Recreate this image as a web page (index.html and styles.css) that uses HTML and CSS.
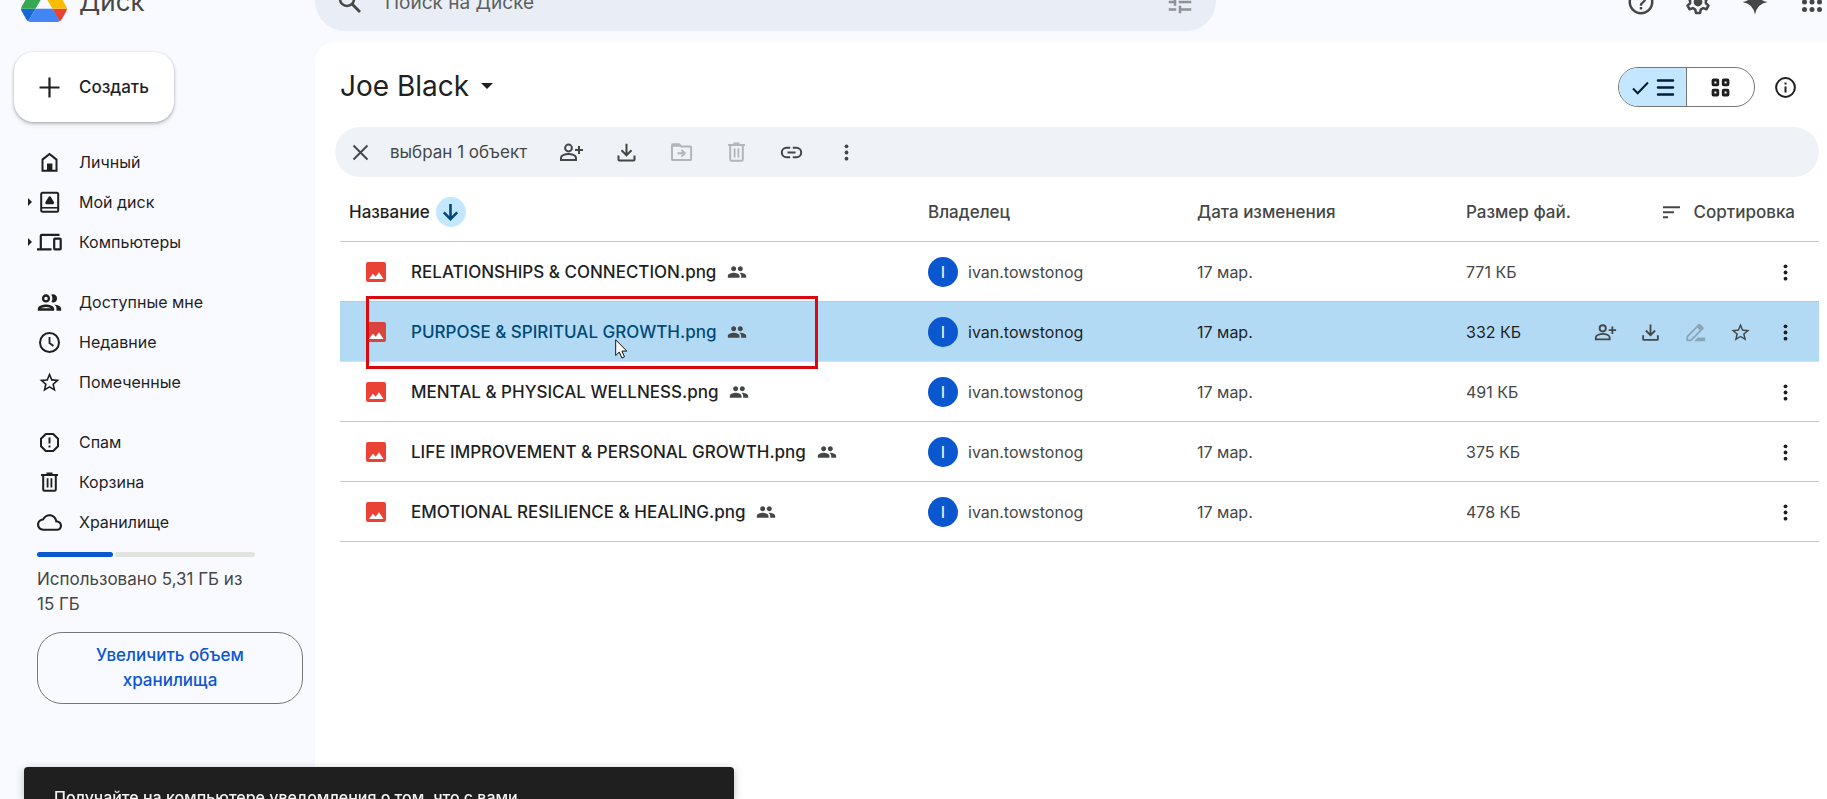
FILE: index.html
```html
<!DOCTYPE html>
<html lang="ru">
<head>
<meta charset="utf-8">
<meta name="viewport" content="width=device-width, initial-scale=1">
<title>Joe Black – Диск</title>
<link rel="stylesheet" href="styles.css">
</head>
<body>
<svg class="sprite" aria-hidden="true">
  <symbol id="i-home" viewBox="0 0 25 25"><path d="M5.5 20.7V9.6L12.5 4l7 5.6v11.1Z" fill="none" stroke="currentColor" stroke-width="2"/><path d="M10 13.5h5.4V21H10Z"/></symbol>
  <symbol id="i-drive" viewBox="0 0 25 25"><rect x="4.2" y="2.7" width="17" height="19" rx="1.5" fill="none" stroke="currentColor" stroke-width="2"/><path d="M4 17.8h17" stroke="currentColor" stroke-width="1.6"/><path d="m12.7 7.9 2.9 4.900H9.800Z" fill="none" stroke="currentColor" stroke-width="3" stroke-linejoin="round"/></symbol>
  <symbol id="i-devices" viewBox="0 0 25 25"><path d="M22.5 4.8H4.8q-1 0-1 1V19M0 19.3h14.5" fill="none" stroke="currentColor" stroke-width="2.2"/><rect x="17.2" y="8.6" width="6.5" height="10.8" rx=".8" fill="none" stroke="currentColor" stroke-width="2.2"/></symbol>
  <symbol id="i-people" viewBox="1.3 1.3 21.4 21.4"><path d="M9 13.75c-2.34 0-7 1.17-7 3.5V19h14v-1.75c0-2.33-4.66-3.5-7-3.5zM4.34 17c.84-.58 2.87-1.25 4.66-1.25s3.82.67 4.66 1.25H4.34zM9 12c1.93 0 3.5-1.57 3.5-3.5S10.930 5 9 5 5.500 6.570 5.500 8.500 7.070 12 9 12zm0-5c.83 0 1.500.67 1.500 1.500S9.830 10 9 10s-1.500-.67-1.500-1.500S8.170 7 9 7zm7.040 6.810c1.160.84 1.960 1.960 1.960 3.440V19h4v-1.750c0-2.020-3.500-3.170-5.960-3.440zM15 12c1.930 0 3.500-1.570 3.500-3.500S16.930 5 15 5c-.54 0-1.040.13-1.500.35.63.89 1 1.980 1 3.150s-.37 2.260-1 3.150c.46.22.96.35 1.500.35z"/></symbol>
  <symbol id="i-clock" viewBox="0 0 25 25"><circle cx="12.500" cy="12.500" r="9.500" fill="none" stroke="currentColor" stroke-width="2"/><path d="M12.500 7v6l4 3" fill="none" stroke="currentColor" stroke-width="1.800"/></symbol>
  <symbol id="i-star" viewBox="-.5 -.5 25 25"><path d="M22 9.240l-7.190-.62L12 2 9.190 8.630 2 9.240l5.460 4.730L5.820 21 12 17.270 18.180 21l-1.630-7.030L22 9.240zM12 15.400l-3.760 2.270 1-4.280-3.320-2.880 4.380-.38L12 6.100l1.710 4.040 4.380.38-3.320 2.880 1 4.280L12 15.400z"/></symbol>
  <symbol id="i-spam" viewBox="0 0 25 25"><path d="M8.800 4h7.400l4.800 4.800v7.400L16.200 21H8.800L4 16.200V8.800Z" fill="none" stroke="currentColor" stroke-width="2" stroke-linejoin="round"/><path d="M11.500 7.500h2v6h-2zM11.500 15.500h2v2h-2z"/></symbol>
  <symbol id="i-trash" viewBox="0 0 25 25"><path d="M4 4.900h17M9.500 3.600h6" fill="none" stroke="currentColor" stroke-width="2"/><path d="M6.200 5v14.500q0 1.300 1.300 1.300h10q1.300 0 1.300-1.300V5" fill="none" stroke="currentColor" stroke-width="2"/><path d="M10.600 8.200v9.200M14.400 8.200v9.200" stroke="currentColor" stroke-width="1.800"/></symbol>
  <symbol id="i-cloud" viewBox="0 0 24 24"><path d="M19.350 10.040C18.670 6.590 15.640 4 12 4 9.110 4 6.600 5.640 5.350 8.040 2.340 8.360 0 10.910 0 14c0 3.310 2.690 6 6 6h13c2.760 0 5-2.240 5-5 0-2.640-2.050-4.780-4.650-4.960zM19 18H6c-2.210 0-4-1.790-4-4 0-2.050 1.530-3.760 3.560-3.970l1.070-.11.5-.95C8.080 7.140 9.940 6 12 6c2.620 0 4.880 1.860 5.390 4.430l.3 1.500 1.530.11c1.560.1 2.780 1.410 2.780 2.960 0 1.650-1.350 3-3 3z"/></symbol>
  <symbol id="i-plus" viewBox="0 0 25 25"><path d="M12.500 2.500v20M2.500 12.500h20" stroke="currentColor" stroke-width="2.200"/></symbol>
  <symbol id="i-close" viewBox="0 0 25 25"><path d="m5.500 5.500 14 14M19.500 5.500l-14 14" stroke="currentColor" stroke-width="1.900"/></symbol>
  <symbol id="i-adduser" viewBox="0 0 25 25"><circle cx="9.500" cy="8" r="3.400" fill="none" stroke="currentColor" stroke-width="2"/><path d="M2 20v-2.300c0-2.400 4.500-3.700 7.500-3.700s7.500 1.300 7.500 3.700V20Z" fill="none" stroke="currentColor" stroke-width="2"/><path d="M20 6v8M16 10h8" stroke="currentColor" stroke-width="2"/></symbol>
  <symbol id="i-download" viewBox="0 0 25 25"><path d="M12.500 3.800v11M7.500 10.300l5 5 5-5M4.500 15.500v4.300q0 .8.800.8h14.400q.8 0 .8-.8v-4.300" fill="none" stroke="currentColor" stroke-width="2"/></symbol>
  <symbol id="i-move" viewBox="0 0 25 25"><path d="M3 19.200V5.200q0-.9.900-.9h6.300l2 2.200h9q.9 0 .9.900v11.800q0 .9-.9.900H3.900q-.9 0-.9-.9Z" fill="none" stroke="currentColor" stroke-width="2"/><path d="M3 4.300h7.200l2 2.500H3Z"/><path d="M8.500 13.300h7M12.500 9.900l3.400 3.400-3.400 3.400" fill="none" stroke="currentColor" stroke-width="1.900"/></symbol>
  <symbol id="i-link" viewBox="0 0 25 25"><path d="M11.200 7.800H7.500a4.700 4.700 0 0 0 0 9.400h3.700M13.800 7.800h3.700a4.700 4.700 0 0 1 0 9.400h-3.700M8.500 12.500h8" fill="none" stroke="currentColor" stroke-width="2"/></symbol>
  <symbol id="i-more" viewBox="0 0 25 25"><circle cx="12.500" cy="6.300" r="1.900"/><circle cx="12.500" cy="12.500" r="1.900"/><circle cx="12.500" cy="18.700" r="1.900"/></symbol>
  <symbol id="i-pen" viewBox="0 0 25 25"><path d="M3.500 21v-4L16.500 4l4 4L7.500 21Z" fill="none" stroke="currentColor" stroke-width="2" stroke-linejoin="round"/><path d="m13.500 6.500 2.500-2.500q1.200-1 2.400 0l2.200 2.200q1.200 1.200 0 2.400L18 11ZM15 17.800h8V22H11Z"/></symbol>
  <symbol id="i-check" viewBox="0 0 25 25"><path d="m5 13.500 4.700 4.700L20 7.500" fill="none" stroke="currentColor" stroke-width="2"/></symbol>
  <symbol id="i-list" viewBox="0 0 25 25"><path d="M5 5.500h15M5 12.500h15M5 19.500h15" stroke="currentColor" stroke-width="2.500" stroke-linecap="round"/></symbol>
  <symbol id="i-grid" viewBox="0 0 25 25"><g fill="none" stroke="currentColor" stroke-width="2.800"><rect x="5" y="5" width="4.800" height="4.800" rx=".5"/><rect x="15.200" y="5" width="4.800" height="4.800" rx=".5"/><rect x="5" y="15.200" width="4.800" height="4.800" rx=".5"/><rect x="15.200" y="15.200" width="4.800" height="4.800" rx=".5"/></g></symbol>
  <symbol id="i-info" viewBox="0 0 25 25"><circle cx="12.500" cy="12.500" r="9.400" fill="none" stroke="currentColor" stroke-width="2"/><path d="M11.500 7.500h2v2h-2zM11.500 11.500h2v6h-2z"/></symbol>
  <symbol id="i-sort" viewBox="0 0 25 25"><path d="M4 7.300h17M4 12.300h11M4 17.300h5" stroke="currentColor" stroke-width="2"/></symbol>
  <symbol id="i-down" viewBox="0 0 25 25"><path d="M12.500 4v15M5.800 12.400l6.700 6.700 6.700-6.700" fill="none" stroke="currentColor" stroke-width="2.600"/></symbol>
  <symbol id="i-shared" viewBox="0 0 24 24"><path d="M16 11c1.660 0 2.990-1.340 2.990-3S17.660 5 16 5s-3 1.340-3 3 1.340 3 3 3zm-8 0c1.660 0 2.990-1.340 2.990-3S9.660 5 8 5 5 6.340 5 8s1.340 3 3 3zm0 2c-2.330 0-7 1.170-7 3.500V19h14v-2.500c0-2.330-4.670-3.500-7-3.500zm8 0c-.29 0-.62.02-.97.05 1.160.84 1.970 1.970 1.970 3.450V19h6v-2.500c0-2.330-4.670-3.500-7-3.500z"/></symbol>
  <symbol id="i-image" viewBox="0 0 20 20"><rect width="20" height="20" rx="2" fill="currentColor"/><path d="m2.800 17 4.200-5.200 2.700 3 3.300-4.600L17.500 17Z" class="peaks"/></symbol>
  <symbol id="i-search" viewBox="0 0 30 30"><circle cx="12" cy="12" r="7" fill="none" stroke="currentColor" stroke-width="2.500"/><path d="m17 17 8 8" stroke="currentColor" stroke-width="2.800"/></symbol>
  <symbol id="i-tune" viewBox="0 0 24 24"><path d="M3 17v2h6v-2H3zM3 5v2h10V5H3zm10 16v-2h8v-2h-8v-2h-2v6h2zM7 9v2H3v2h4v2h2V9H7zm14 4v-2H11v2h10zm-6-4h2V7h4V5h-4V3h-2v6z"/></symbol>
  <symbol id="i-help" viewBox="0 0 24 24"><path d="M11 18h2v-2h-2v2zm1-16C6.480 2 2 6.480 2 12s4.480 10 10 10 10-4.480 10-10S17.520 2 12 2zm0 18c-4.410 0-8-3.590-8-8s3.590-8 8-8 8 3.590 8 8-3.590 8-8 8zm0-14c-2.210 0-4 1.790-4 4h2c0-1.100.9-2 2-2s2 .9 2 2c0 2-3 1.750-3 5h2c0-2.250 3-2.500 3-5 0-2.210-1.790-4-4-4z"/></symbol>
  <symbol id="i-gear" viewBox="0 0 24 24"><path d="M10.300 3h3.400l.5 2.700 1.900 1.100 2.600-.9 1.700 2.900-2.100 1.900v2.300l2.100 1.900-1.700 2.900-2.600-.9-1.900 1.100-.5 2.700h-3.400l-.5-2.700-1.900-1.100-2.600.9-1.700-2.900 2.100-1.900v-2.300L3.600 8.800l1.700-2.900 2.600.9 1.900-1.100Z" fill="none" stroke="currentColor" stroke-width="2" stroke-linejoin="round"/><circle cx="12" cy="12" r="3.500"/></symbol>
  <symbol id="i-spark" viewBox="0 0 24 24"><path d="M12 2q1.500 8.500 10 10-8.500 1.500-10 10Q10.500 13.500 2 12q8.500-1.500 10-10Z"/></symbol>
  <symbol id="i-apps" viewBox="0 0 24 24"><g><circle cx="6" cy="6" r="2"/><circle cx="12" cy="6" r="2"/><circle cx="18" cy="6" r="2"/><circle cx="6" cy="12" r="2"/><circle cx="12" cy="12" r="2"/><circle cx="18" cy="12" r="2"/><circle cx="6" cy="18" r="2"/><circle cx="12" cy="18" r="2"/><circle cx="18" cy="18" r="2"/></g></symbol>
</svg>

<div class="app">
  <header class="topbar">
    <a class="brand" href="#">
      <svg class="logo" viewBox="0 0 87.3 78" aria-hidden="true">
        <path fill="#1967d2" d="m6.600 66.850 3.850 6.650c.8 1.400 1.950 2.500 3.300 3.300l13.750-23.800H0c0 1.550.4 3.100 1.200 4.500z"/>
        <path fill="#34a853" d="M43.650 25 29.900 1.200c-1.350.8-2.500 1.900-3.300 3.300L1.200 48.500C.4 49.900 0 51.450 0 53h27.500z"/>
        <path fill="#ea4335" d="M73.550 76.800c1.350-.8 2.500-1.900 3.300-3.300l1.600-2.750 7.650-13.250c.8-1.400 1.200-2.950 1.200-4.500H59.800l5.850 11.500z"/>
        <path fill="#188038" d="M43.650 25 57.400 1.200C56.050.4 54.500 0 52.900 0H34.400c-1.600 0-3.150.45-4.500 1.200z"/>
        <path fill="#4285f4" d="M59.800 53H27.500L13.750 76.800c1.350.8 2.900 1.200 4.500 1.200h50.800c1.600 0 3.150-.45 4.500-1.200z"/>
        <path fill="#fbbc04" d="m73.400 26.500-12.700-22c-.8-1.400-1.950-2.500-3.300-3.300L43.650 25 59.800 53h27.450c0-1.550-.4-3.100-1.200-4.500z"/>
      </svg>
      <span>Диск</span>
    </a>
    <form class="search" role="search">
      <svg class="icon-lg" aria-hidden="true"><use href="#i-search"/></svg>
      <input type="search" placeholder="Поиск на Диске" aria-label="Поиск на Диске">
      <button class="ghost tune" type="button" aria-label="Расширенный поиск"><svg class="icon-lg"><use href="#i-tune"/></svg></button>
    </form>
    <div class="tools">
      <button class="ghost" type="button" aria-label="Справка"><svg class="icon-lg"><use href="#i-help"/></svg></button>
      <button class="ghost" type="button" aria-label="Настройки"><svg class="icon-lg"><use href="#i-gear"/></svg></button>
      <button class="ghost" type="button" aria-label="Gemini"><svg class="icon-lg"><use href="#i-spark"/></svg></button>
      <button class="ghost" type="button" aria-label="Приложения"><svg class="icon-lg"><use href="#i-apps"/></svg></button>
    </div>
  </header>

  <aside class="sidebar">
    <button class="create" type="button"><svg class="icon"><use href="#i-plus"/></svg>Создать</button>
    <nav class="nav">
      <ul>
        <li><a href="#"><svg class="icon"><use href="#i-home"/></svg>Личный</a></li>
        <li class="tree"><a href="#"><svg class="icon"><use href="#i-drive"/></svg>Мой диск</a></li>
        <li class="tree"><a href="#"><svg class="icon"><use href="#i-devices"/></svg>Компьютеры</a></li>
      </ul>
      <ul>
        <li><a href="#"><svg class="icon"><use href="#i-people"/></svg>Доступные мне</a></li>
        <li><a href="#"><svg class="icon"><use href="#i-clock"/></svg>Недавние</a></li>
        <li><a href="#"><svg class="icon"><use href="#i-star"/></svg>Помеченные</a></li>
      </ul>
      <ul>
        <li><a href="#"><svg class="icon"><use href="#i-spam"/></svg>Спам</a></li>
        <li><a href="#"><svg class="icon"><use href="#i-trash"/></svg>Корзина</a></li>
        <li><a href="#"><svg class="icon"><use href="#i-cloud"/></svg>Хранилище</a></li>
      </ul>
    </nav>
    <section class="storage">
      <div class="meter" role="img" aria-label="Занято 35%"><span class="used" style="width: 35%"></span><span class="free"></span></div>
      <p>Использовано 5,31 ГБ из 15 ГБ</p>
      <button class="upgrade" type="button">Увеличить объем хранилища</button>
    </section>
  </aside>

  <main class="content">
    <div class="heading">
      <h1><button class="ghost crumb" type="button">Joe Black<span class="caret"></span></button></h1>
      <div class="views">
        <div class="toggle">
          <button class="on" type="button" aria-pressed="true" aria-label="Список"><svg class="icon"><use href="#i-check"/></svg><svg class="icon"><use href="#i-list"/></svg></button>
          <button type="button" aria-pressed="false" aria-label="Сетка"><svg class="icon"><use href="#i-grid"/></svg></button>
        </div>
        <button class="ghost" type="button" aria-label="Сведения"><svg class="icon"><use href="#i-info"/></svg></button>
      </div>
    </div>

    <div class="selection" role="toolbar">
      <button class="ghost" type="button" aria-label="Отменить выбор"><svg class="icon"><use href="#i-close"/></svg></button>
      <span class="count">выбран 1 объект</span>
      <div class="acts">
        <button class="ghost" type="button" aria-label="Поделиться"><svg class="icon"><use href="#i-adduser"/></svg></button>
        <button class="ghost" type="button" aria-label="Скачать"><svg class="icon"><use href="#i-download"/></svg></button>
        <button class="ghost" type="button" aria-label="Переместить" disabled><svg class="icon"><use href="#i-move"/></svg></button>
        <button class="ghost" type="button" aria-label="Удалить" disabled><svg class="icon"><use href="#i-trash"/></svg></button>
        <button class="ghost" type="button" aria-label="Копировать ссылку"><svg class="icon"><use href="#i-link"/></svg></button>
        <button class="ghost" type="button" aria-label="Ещё"><svg class="icon"><use href="#i-more"/></svg></button>
      </div>
    </div>

    <table class="files">
      <colgroup><col><col class="c-owner"><col class="c-date"><col class="c-size"><col class="c-acts"></colgroup>
      <thead>
        <tr>
          <th class="by-name" scope="col"><div class="cell">Название<button class="dir" type="button" aria-label="Изменить направление сортировки"><svg class="icon"><use href="#i-down"/></svg></button></div></th>
          <th scope="col">Владелец</th>
          <th scope="col">Дата изменения</th>
          <th scope="col">Размер фай.</th>
          <th scope="col"><button class="ghost sort" type="button"><svg class="icon"><use href="#i-sort"/></svg>Сортировка</button></th>
        </tr>
      </thead>
      <tbody>
        <tr>
          <td class="name"><div class="cell"><svg class="file"><use href="#i-image"/></svg><span>RELATIONSHIPS &amp; CONNECTION.png</span><svg class="shared"><use href="#i-shared"/></svg></div></td>
          <td><div class="cell owner"><span class="avatar">I</span>ivan.towstonog</div></td>
          <td>17 мар.</td><td>771 КБ</td>
          <td><div class="rowacts"><button class="ghost" type="button" aria-label="Ещё"><svg class="icon"><use href="#i-more"/></svg></button></div></td>
        </tr>
        <tr class="picked">
          <td class="name"><div class="cell"><svg class="file"><use href="#i-image"/></svg><span>PURPOSE &amp; SPIRITUAL GROWTH.png</span><svg class="shared"><use href="#i-shared"/></svg></div><span class="marker"></span><svg class="pointer" viewBox="0 0 13 20"><path d="M.7.8v15.700l3.600-3.400 2.600 5.900 2.600-1.200-2.600-5.700h4.900Z" fill="#fff" stroke="#111" stroke-width="1"/></svg></td>
          <td><div class="cell owner"><span class="avatar">I</span>ivan.towstonog</div></td>
          <td>17 мар.</td><td>332 КБ</td>
          <td><div class="rowacts">
            <button class="ghost" type="button" aria-label="Поделиться"><svg class="icon-row"><use href="#i-adduser"/></svg></button>
            <button class="ghost" type="button" aria-label="Скачать"><svg class="icon-row"><use href="#i-download"/></svg></button>
            <button class="ghost" type="button" aria-label="Переименовать" disabled><svg class="icon-row"><use href="#i-pen"/></svg></button>
            <button class="ghost" type="button" aria-label="Пометить"><svg class="icon-row"><use href="#i-star"/></svg></button>
            <button class="ghost" type="button" aria-label="Ещё"><svg class="icon"><use href="#i-more"/></svg></button>
          </div></td>
        </tr>
        <tr>
          <td class="name"><div class="cell"><svg class="file"><use href="#i-image"/></svg><span>MENTAL &amp; PHYSICAL WELLNESS.png</span><svg class="shared"><use href="#i-shared"/></svg></div></td>
          <td><div class="cell owner"><span class="avatar">I</span>ivan.towstonog</div></td>
          <td>17 мар.</td><td>491 КБ</td>
          <td><div class="rowacts"><button class="ghost" type="button" aria-label="Ещё"><svg class="icon"><use href="#i-more"/></svg></button></div></td>
        </tr>
        <tr>
          <td class="name"><div class="cell"><svg class="file"><use href="#i-image"/></svg><span>LIFE IMPROVEMENT &amp; PERSONAL GROWTH.png</span><svg class="shared"><use href="#i-shared"/></svg></div></td>
          <td><div class="cell owner"><span class="avatar">I</span>ivan.towstonog</div></td>
          <td>17 мар.</td><td>375 КБ</td>
          <td><div class="rowacts"><button class="ghost" type="button" aria-label="Ещё"><svg class="icon"><use href="#i-more"/></svg></button></div></td>
        </tr>
        <tr>
          <td class="name"><div class="cell"><svg class="file"><use href="#i-image"/></svg><span>EMOTIONAL RESILIENCE &amp; HEALING.png</span><svg class="shared"><use href="#i-shared"/></svg></div></td>
          <td><div class="cell owner"><span class="avatar">I</span>ivan.towstonog</div></td>
          <td>17 мар.</td><td>478 КБ</td>
          <td><div class="rowacts"><button class="ghost" type="button" aria-label="Ещё"><svg class="icon"><use href="#i-more"/></svg></button></div></td>
        </tr>
      </tbody>
    </table>
  </main>
</div>
<div class="toast" role="status">Получайте на компьютере уведомления о том, что с вами</div>
</body>
</html>
```
FILE: styles.css
```css
*, *::before, *::after { box-sizing: border-box; }

body {
  margin: 0;
  height: 100vh;
  overflow: hidden;
  background: #f9faff;
  color: #1f1f1f;
  font: 400 17px/25px Inter, "Noto Sans", sans-serif;
}

button, input { font: inherit; color: inherit; }
button { cursor: pointer; }
ul, p, h1 { margin: 0; padding: 0; list-style: none; font: inherit; }
a { color: inherit; text-decoration: none; }
svg { display: block; flex: none; fill: currentColor; }

.sprite { position: absolute; width: 0; height: 0; }
.icon { width: 25px; height: 25px; }
.icon-lg { width: 30px; height: 30px; }
.icon-row { width: 23px; height: 23px; }

.ghost {
  display: flex;
  align-items: center;
  justify-content: center;
  padding: 0;
  border: 0;
  background: none;
}
.ghost:disabled { opacity: .35; }

.app {
  display: grid;
  grid-template: 42px 1fr / 315px 1fr;
  height: 100%;
}

/* Top bar */
.topbar {
  grid-column: 1 / -1;
  display: grid;
  grid-template-columns: 315px minmax(200px, 901px) 1fr;
  align-content: end;
  overflow: hidden;
  padding-bottom: 11px;
  color: #444746;
}
.brand {
  display: flex;
  align-items: center;
  gap: 12px;
  height: 60px;
  padding-left: 21px;
  font-size: 26px;
}
.logo { width: 46px; height: 41px; }
.search {
  display: flex;
  align-items: center;
  gap: 20px;
  height: 60px;
  padding: 2px 21px 0 20px;
  border-radius: 30px;
  background: #e9eef6;
}
.search input {
  flex: 1;
  min-width: 0;
  padding: 0;
  border: 0;
  outline: 0;
  background: none;
  font-size: 19px;
}
.search input::placeholder { color: #5c5f5e; opacity: 1; }
.tune { opacity: .55; }
.tools {
  display: flex;
  align-items: center;
  justify-content: flex-end;
  gap: 27px;
  height: 60px;
  padding-top: 2px;
}

/* Sidebar */
.sidebar { padding: 10px 12px 0 14px; }
.create {
  display: flex;
  align-items: center;
  gap: 17px;
  height: 70px;
  padding: 0 25px 0 23px;
  border: 0;
  border-radius: 20px;
  background: #fff;
  box-shadow: 0 1px 3px rgba(60, 64, 67, .4), 0 3px 5px rgba(60, 64, 67, .12);
  font-weight: 500;
}
.nav {
  display: flex;
  flex-direction: column;
  gap: 20px;
  padding-top: 20px;
  font-size: 16px;
}
.nav a {
  display: flex;
  align-items: center;
  gap: 17px;
  height: 40px;
  padding-left: 23px;
}
.nav li { position: relative; }
.tree::before {
  content: "";
  position: absolute;
  left: 14px;
  top: 16px;
  border: 4px solid transparent;
  border-left-color: currentColor;
  border-right: 0;
}
.storage {
  padding: 10px 0 0 23px;
  color: #444746;
}
.meter {
  display: flex;
  gap: 2px;
  width: 218px;
  height: 5px;
  margin-bottom: 10px;
}
.used, .free { border-radius: 3px; }
.used { background: #0b57d0; }
.free { flex: 1; background: #e1e3e1; }
.storage p { width: 218px; }
.upgrade {
  width: 100%;
  margin-top: 15px;
  padding: 10px 50px;
  border: 1px solid #747775;
  border-radius: 25px;
  background: none;
  color: #0b57d0;
  font-weight: 500;
}

/* File list */
.content {
  padding: 15px 8px 0 20px;
  border-radius: 20px 0 0 0;
  background: #fff;
}
.heading {
  display: flex;
  align-items: center;
  justify-content: space-between;
  height: 60px;
  padding: 0 21px 0 5px;
}
.crumb { gap: 12px; padding-bottom: 2px; font-size: 28px; line-height: 40px; }
.caret {
  border: 6px solid transparent;
  border-top-color: currentColor;
  border-bottom: 0;
}
.views { display: flex; align-items: center; gap: 18px; }
.toggle {
  display: flex;
  width: 137px;
  height: 40px;
  overflow: hidden;
  border: 1px solid #747775;
  border-radius: 20px;
}
.toggle button {
  flex: 1;
  display: flex;
  align-items: center;
  justify-content: center;
  padding: 0;
  border: 0;
  background: none;
}
.toggle .on {
  border-right: 1px solid #747775;
  background: #c2e7ff;
  color: #001d35;
}
.selection {
  display: flex;
  align-items: center;
  height: 50px;
  margin: 10px 0;
  padding: 0 13px;
  border-radius: 25px;
  background: #eff3f8;
  color: #444746;
}
.count { width: 169px; margin-left: 17px; white-space: nowrap; }
.acts { display: flex; gap: 30px; }

.files {
  width: calc(100% - 5px);
  margin-left: 5px;
  border-spacing: 0;
  table-layout: fixed;
}
.c-owner, .c-date { width: 269px; }
.c-size { width: 108px; }
.c-acts { width: 245px; }
.files th, .files td {
  height: 60px;
  padding: 1px 0 0;
  border-bottom: 1px solid #c7c7c7;
  color: #444746;
  font-size: 16px;
  text-align: left;
  white-space: nowrap;
}
.files th { height: 55px; padding: 0 0 4px; font-size: 17px; font-weight: 500; }
.cell { display: flex; align-items: center; }
.by-name .cell { gap: 6px; padding-left: 9px; color: #1f1f1f; }
.dir {
  display: grid;
  place-items: center;
  width: 30px;
  height: 30px;
  padding: 0;
  border: 0;
  border-radius: 50%;
  background: #c2e7ff;
  color: #004a77;
}
.sort { gap: 10px; margin-left: auto; padding-right: 24px; }
.files .name { position: relative; padding-left: 26px; color: #1f1f1f; font-size: 17px; font-weight: 500; }
.file { width: 20px; height: 20px; margin-right: 25px; color: #ea4335; }
.peaks { fill: #fff; }
.shared { width: 20px; height: 20px; margin-left: 11px; color: #444746; }
.owner { gap: 10px; }
.avatar {
  display: grid;
  place-items: center;
  width: 30px;
  height: 30px;
  border-radius: 50%;
  background: #0b57d0;
  color: #fff;
}
.rowacts {
  display: flex;
  justify-content: flex-end;
  gap: 20px;
  padding-right: 21px;
  color: #444746;
}
.rowacts .ghost { width: 25px; }
.rowacts .ghost:last-child { color: #1f1f1f; }
.picked { background: #b3daf5; }
.files .picked td { border-bottom-color: #c2e7ff; color: #1f1f1f; }
.files .picked .name { color: #004a77; }
.picked .file { color: #d9443c; }
.picked .peaks { fill: #b3daf5; }

/* Overlays */
.marker {
  position: absolute;
  left: 26px;
  top: -6px;
  width: 452px;
  height: 73px;
  border: 3px solid #d90a0f;
}
.pointer {
  position: absolute;
  left: 275px;
  top: 37px;
  width: 13px;
  height: 20px;
}
.toast {
  position: fixed;
  left: 24px;
  bottom: 0;
  width: 710px;
  max-width: calc(100% - 48px);
  height: 32px;
  padding: 18px 30px 0;
  overflow: hidden;
  border-radius: 4px 4px 0 0;
  background: #1f1f1f;
  box-shadow: 0 2px 8px rgba(0, 0, 0, .25);
  color: #f2f2f2;
  font-size: 16px;
  font-weight: 500;
  white-space: nowrap;
}
```
